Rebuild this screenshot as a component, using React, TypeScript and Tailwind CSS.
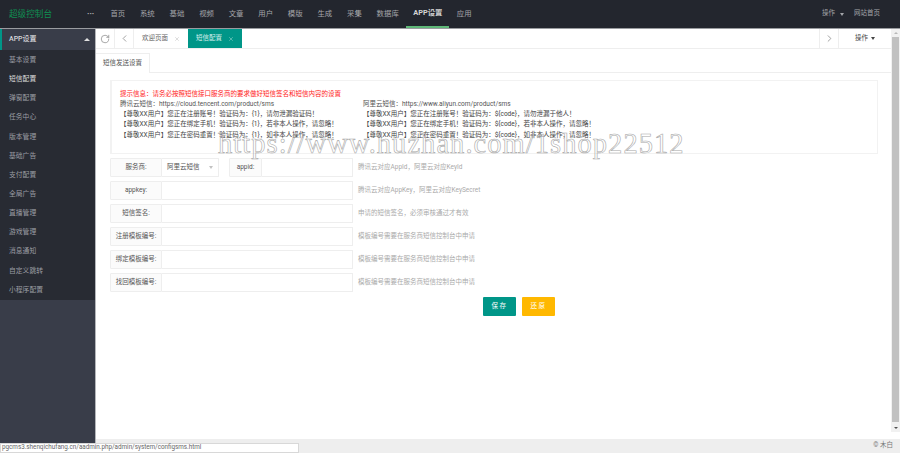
import { RotateCw, ChevronLeft, ChevronRight, X } from 'lucide-react';

const navItems = ['首页', '系统', '基础', '视频', '文章', '用户', '模版', '生成', '采集', '数据库', 'APP设置', '应用'];
const sideItems = ['基本设置', '短信配置', '弹窗配置', '任务中心', '版本管理', '基础广告', '支付配置', '全局广告', '直播管理', '游戏管理', '消息通知', '自定义跳转', '小程序配置'];

const leftLines = [
  '【尊敬XX用户】您正在注册账号！验证码为：{1}，请勿泄漏验证码！',
  '【尊敬XX用户】您正在绑定手机！验证码为：{1}，若非本人操作，请忽略！',
  '【尊敬XX用户】您正在密码重置！验证码为：{1}，如非本人操作，请忽略！',
];
const rightLines = [
  '【尊敬XX用户】您正在注册账号！验证码为：${code}，请勿泄漏于他人！',
  '【尊敬XX用户】您正在绑定手机！验证码为：${code}，若非本人操作，请忽略！',
  '【尊敬XX用户】您正在密码重置！验证码为：${code}，如非本人操作，请忽略！',
];

const rows = [
  { label: 'appkey:', help: '腾讯云对应AppKey，阿里云对应KeySecret' },
  { label: '短信签名:', help: '申请的短信签名，必须审核通过才有效' },
  { label: '注册模板编号:', help: '模板编号需要在服务商短信控制台中申请' },
  { label: '绑定模板编号:', help: '模板编号需要在服务商短信控制台中申请' },
  { label: '找回模板编号:', help: '模板编号需要在服务商短信控制台中申请' },
];

function Label({ children, className }: { children: React.ReactNode; className: string }) {
  return (
    <div className={`flex h-full shrink-0 items-center justify-center whitespace-nowrap rounded-l-[1px] border border-[#eeeeee] bg-[#fbfbfb] text-[#555555] ${className}`}>
      {children}
    </div>
  );
}

export default function App() {
  return (
    <div className="relative flex h-[453px] w-[900px] flex-col overflow-hidden bg-white font-['Roboto','Noto_Sans_CJK_SC',sans-serif] text-[6.5px] text-[#555555]">
      <header className="flex h-[28px] shrink-0 items-center bg-[#23262e]">
        <div className="w-[87px] pl-[9px] text-[8.6px] text-[#0f8f52]">超级控制台</div>
        <div className="w-[16px] text-[8px] font-bold leading-none text-[#c2c2c2]">···</div>
        <nav className="flex h-full items-stretch">
          {navItems.map((item) => (
            <div
              key={item}
              className={
                item === 'APP设置'
                  ? 'flex items-center border-b-2 border-[#5fb878] px-[7px] text-[7.4px] font-bold text-[#d4d4d4]'
                  : 'flex items-center px-[7.4px] text-[7.4px] text-[#a3a5a9]'
              }
            >
              {item}
            </div>
          ))}
        </nav>
        <div className="ml-auto flex items-center pr-[20px] text-[6.5px] text-[#a3a5a9]">
          <span>操作</span>
          <span className="ml-[5px] h-0 w-0 border-x-[2.5px] border-t-[3px] border-x-transparent border-t-[#a3a5a9]" />
          <span className="ml-[10px]">网站首页</span>
        </div>
      </header>

      <div className="flex min-h-0 flex-1 border-t border-[#9a9ca0]">
        <aside className="flex w-[96px] shrink-0 flex-col border-r border-[#b4b6ba] bg-[#393d49]">
          <div className="flex h-[21px] shrink-0 items-center justify-between border-l-2 border-[#009688] bg-[#393d49] pl-[7px] pr-[5px] text-[7px] font-medium text-[#d8d9dc]">
            <span>APP设置</span>
            <span className="h-0 w-0 border-x-[3px] border-b-[3px] border-x-transparent border-b-[#e0e0e0]" />
          </div>
          <ul className="h-[250px] shrink-0 bg-[#282b33] pt-[0.5px]">
            {sideItems.map((item) => (
              <li
                key={item}
                className={
                  item === '短信配置'
                    ? 'flex h-[19.15px] items-center pl-[9px] text-[6.8px] text-[#dcdcdc]'
                    : 'flex h-[19.15px] items-center pl-[9px] text-[6.8px] text-[#9b9da3]'
                }
              >
                {item}
              </li>
            ))}
          </ul>
        </aside>

        <main className="flex min-w-0 flex-1 flex-col">
          <div className="flex min-h-0 flex-1">
            <div className="min-w-0 flex-1">
              <div className="flex h-[20px] items-stretch border-b border-[#eeeeee]">
                <div className="flex w-[19px] items-center justify-center border-r border-[#eeeeee]">
                  <RotateCw size={10} strokeWidth={1.5} className="text-[#777777]" />
                </div>
                <div className="flex w-[19px] items-center justify-center border-r border-[#eeeeee]">
                  <ChevronLeft size={11} strokeWidth={1.5} className="text-[#777777]" />
                </div>
                <div className="flex w-[54px] items-center justify-center gap-[6px] text-[#666666]">
                  <span>欢迎页面</span>
                  <X size={6} className="text-[#bbbbbb]" />
                </div>
                <div className="flex w-[54px] items-center justify-center gap-[6px] bg-[#009688] text-[#d5efec]">
                  <span>短信配置</span>
                  <X size={6} className="text-[#a8dcd6]" />
                </div>
                <div className="flex-1" />
                <div className="flex w-[20px] items-center justify-center border-x border-[#eeeeee]">
                  <ChevronRight size={11} strokeWidth={1.5} className="text-[#777777]" />
                </div>
                <div className="flex w-[52px] items-center justify-center gap-[3px] text-[#444444]">
                  <span>操作</span>
                  <span className="h-0 w-0 border-x-[2.5px] border-t-[3px] border-x-transparent border-t-[#444444]" />
                </div>
              </div>

              <div className="mt-[4px] flex h-[20px] border-b border-[#eeeeee]">
                <div className="-mb-px flex w-[54px] items-center justify-center border-r border-t border-[#eeeeee] bg-white text-[#555555]">
                  短信发送设置
                </div>
              </div>

              <section className="ml-[14px] mr-[13px] mt-[7px] h-[74px] border border-l-2 border-[#f2f2f2] pl-[8px] pt-[7.5px] text-[6.5px] leading-[10.3px]">
                <p className="text-[#ff2222]">提示信息：请务必按照短信接口服务商的要求做好短信签名和短信内容的设置</p>
                <div className="flex">
                  <div className="w-[243px] shrink-0">
                    <p>腾讯云短信：https://cloud.tencent.com/product/sms</p>
                    {leftLines.map((line) => (
                      <p key={line} className="whitespace-nowrap text-[#444444]">{line}</p>
                    ))}
                  </div>
                  <div>
                    <p>阿里云短信：https://www.aliyun.com/product/sms</p>
                    {rightLines.map((line) => (
                      <p key={line} className="whitespace-nowrap text-[#444444]">{line}</p>
                    ))}
                  </div>
                </div>
              </section>

              <form className="ml-[14px] mt-[4px] flex flex-col gap-[4px]">
                <div className="flex h-[19px] items-center">
                  <Label className="w-[52px]">服务商:</Label>
                  <div className="flex h-full w-[57px] items-center justify-between rounded-r-[1px] border border-l-0 border-[#eeeeee] pl-[5px] pr-[5px]">
                    <span>阿里云短信</span>
                    <span className="h-0 w-0 border-x-[2.5px] border-t-[3px] border-x-transparent border-t-[#c2c2c2]" />
                  </div>
                  <Label className="ml-[10px] w-[33px]">appid:</Label>
                  <div className="h-full w-[91px] border border-l-0 border-[#eeeeee]" />
                  <span className="ml-[5px] text-[#aaaaaa]">腾讯云对应AppId，阿里云对应KeyId</span>
                </div>
                {rows.map((row) => (
                  <div key={row.label} className="flex h-[19px] items-center">
                    <Label className="w-[52px]">{row.label}</Label>
                    <div className="h-full w-[191px] border border-l-0 border-[#eeeeee]" />
                    <span className="ml-[5px] text-[#aaaaaa]">{row.help}</span>
                  </div>
                ))}
                <div className="ml-[373px] mt-px flex h-[19px] gap-[6px]">
                  <button type="button" className="w-[33px] rounded-[1px] bg-[#009688] text-[6.5px] tracking-[1.5px] text-white">保存</button>
                  <button type="button" className="w-[33px] rounded-[1px] bg-[#ffb800] text-[6.5px] tracking-[1.5px] text-white">还原</button>
                </div>
              </form>
            </div>

            <div className="flex h-[403px] w-[9px] shrink-0 flex-col items-center bg-[#f1f1f1]">
              <span className="mt-[3px] h-0 w-0 border-x-[2px] border-b-[2px] border-x-transparent border-b-[#b8b8b8]" />
              <div className="mt-[3px] h-[385px] w-[7px] bg-[#c1c1c1]" />
              <span className="mt-[5px] h-0 w-0 border-x-[2px] border-t-[2px] border-x-transparent border-t-[#505050]" />
            </div>
          </div>
          <footer className="flex h-[14px] shrink-0 items-center justify-end bg-[#eeeeee] pr-[7px] text-[6.5px] text-[#777777]">
            © 木白
          </footer>
        </main>
      </div>

      {/* hover url shown by the browser */}
      <div className="absolute bottom-0 left-0 flex h-[10px] w-[299px] items-center border border-[#d8d8d8] bg-white pl-[1px] text-[6.3px] text-[#666666]">
        pgcms3.shenqichufang.cn/aadmin.php/admin/system/configsms.html
      </div>

      {/* watermark over the page */}
      <div className="pointer-events-none absolute left-[218px] top-[126px] whitespace-nowrap font-['Liberation_Serif',serif] text-[28.5px] leading-[36px] tracking-[1.05px] text-transparent [-webkit-text-stroke:0.6px_#a9a9a9]">
        https://www.huzhan.com/1shop22512
      </div>
    </div>
  );
}
